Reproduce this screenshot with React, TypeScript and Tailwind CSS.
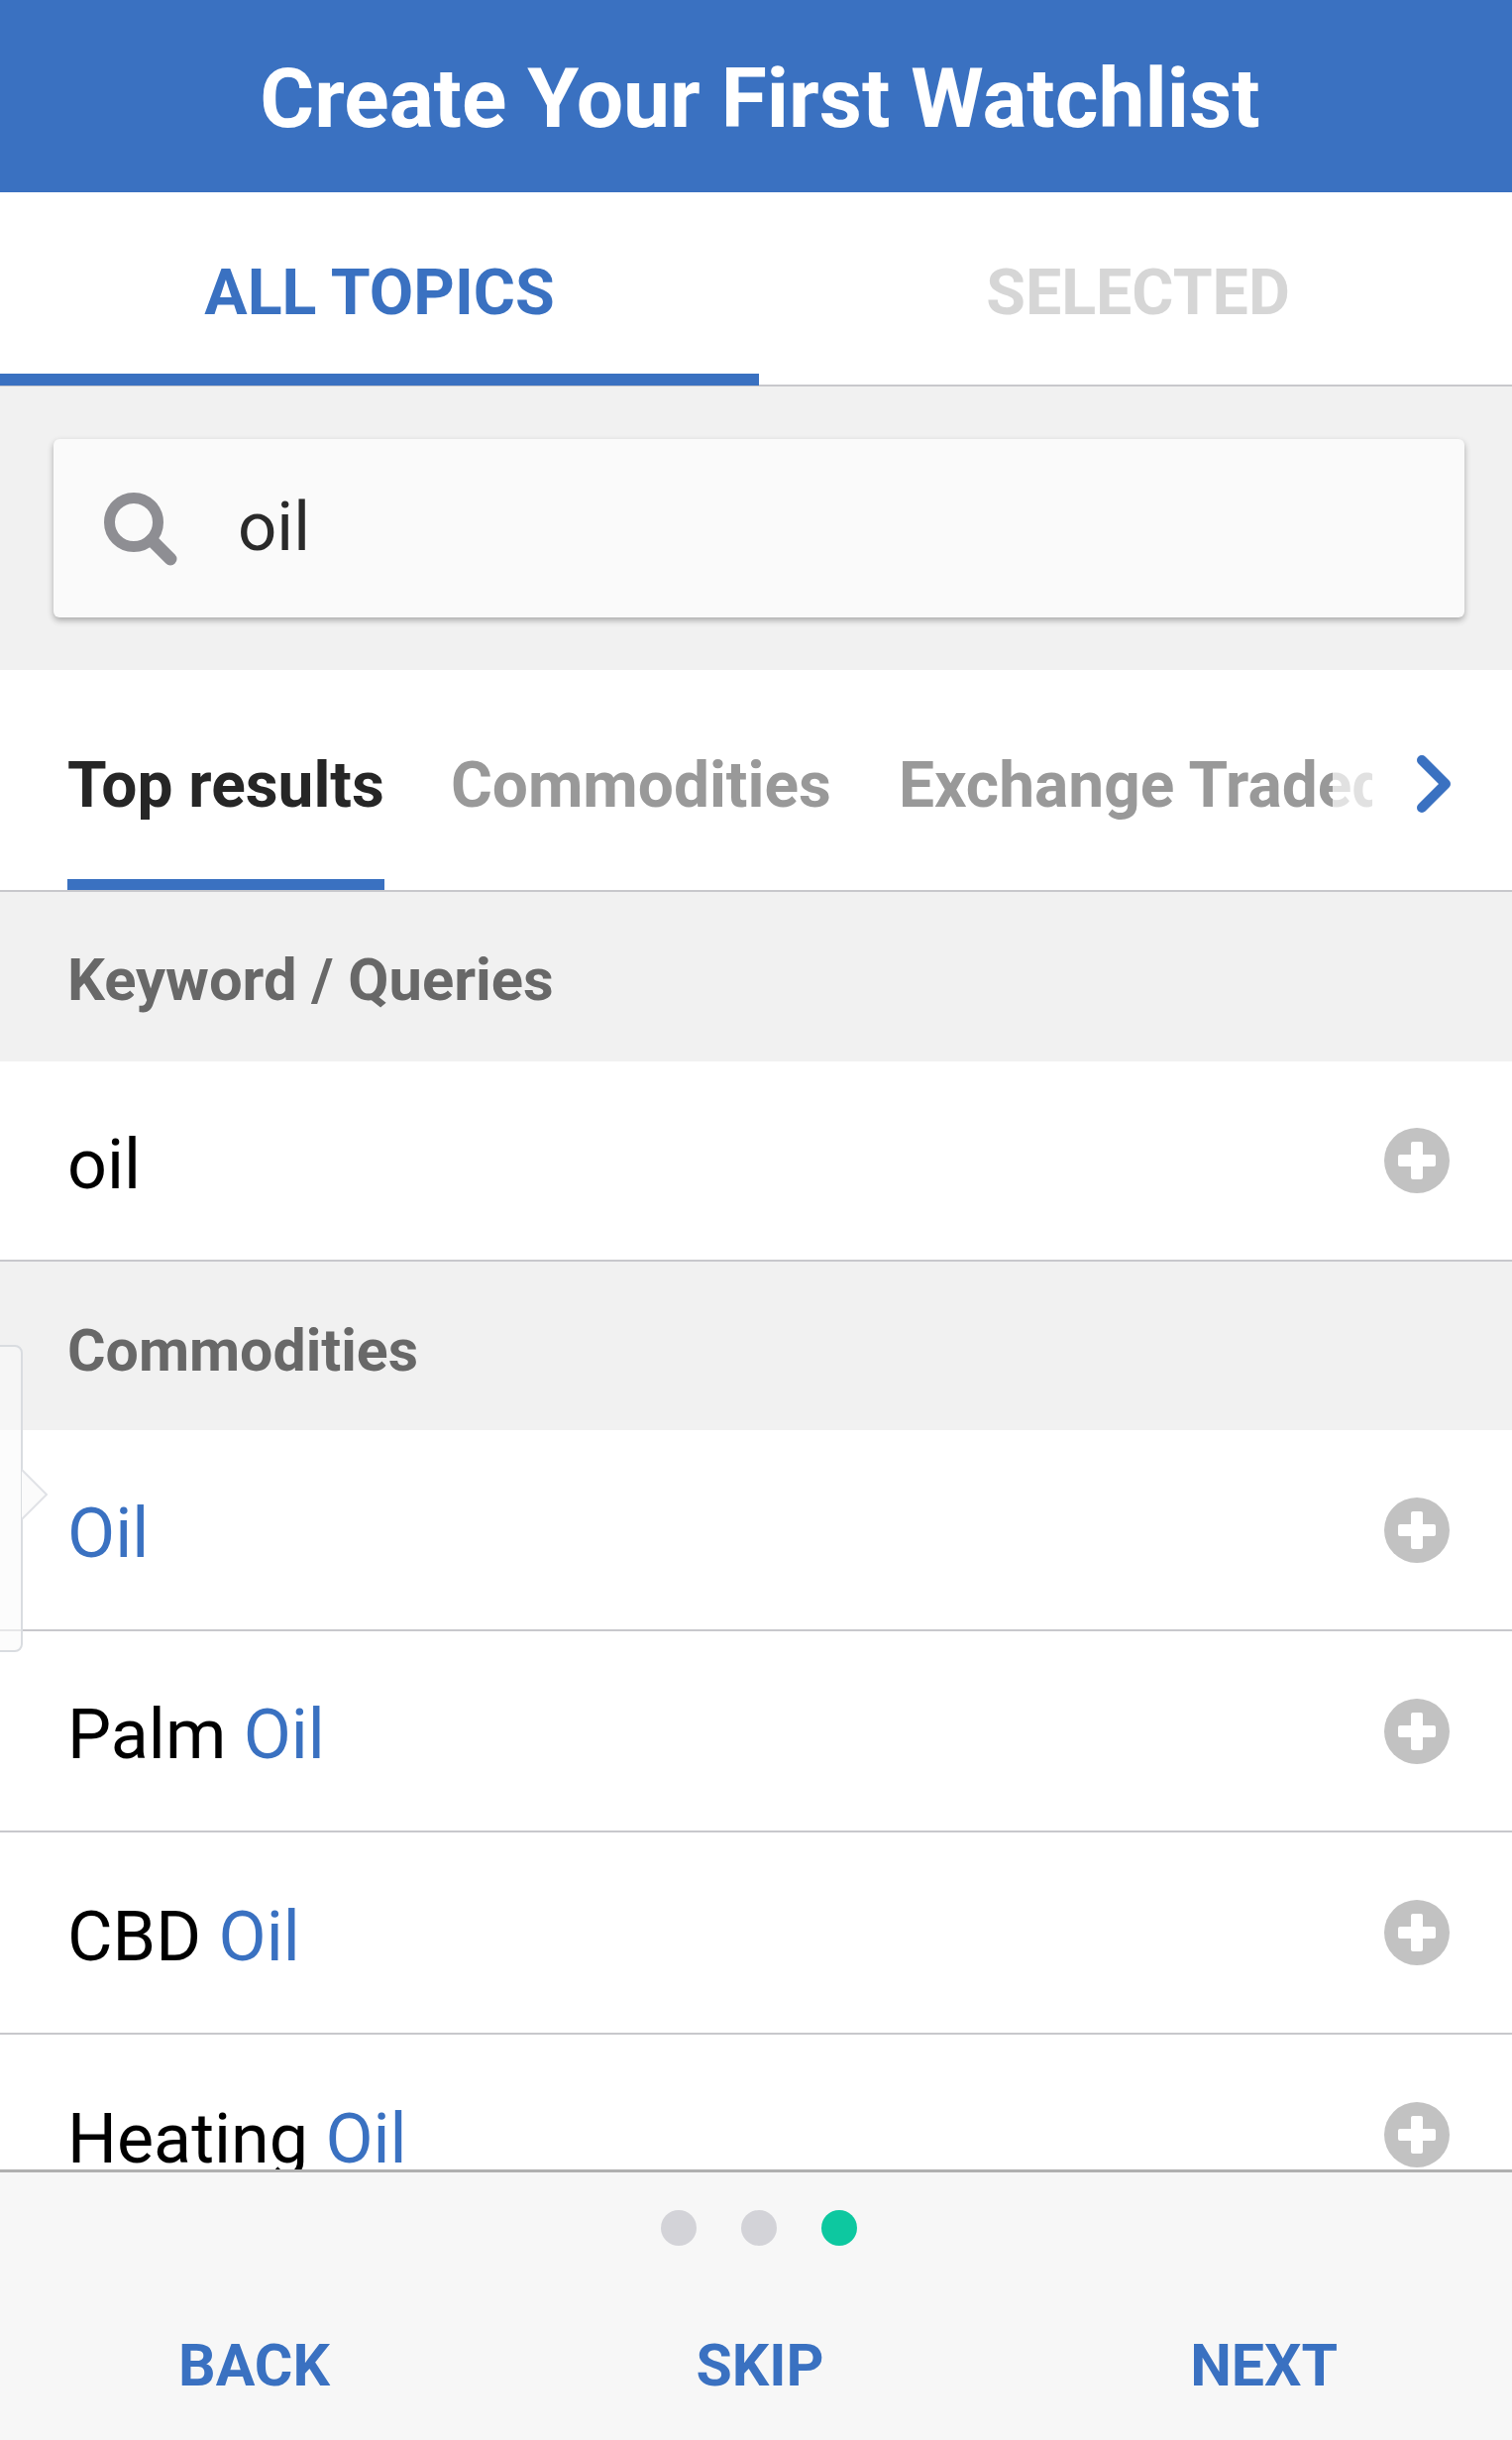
const BLUE = "text-[#3a71c1]";

function Plus({ className = "" }: { className?: string }) {
  return (
    <svg viewBox="0 0 66 66" className={`w-[66px] h-[66px] shrink-0 ${className}`}>
      <circle cx="33" cy="33" r="33" fill="#c2c2c2" />
      <rect x="14" y="27" width="38" height="12" rx="2" fill="#fff" />
      <rect x="27" y="14" width="12" height="38" rx="2" fill="#fff" />
    </svg>
  );
}

function Row({ pre, hit, h, border = true }: { pre?: string; hit: string; h: string; border?: boolean }) {
  return (
    <div className={`${h} shrink-0 bg-white flex items-center justify-between pl-[68px] pr-[63px] ${border ? "border-b-2 border-[#c8c8cc]" : ""}`}>
      <span className="text-[70px] leading-none text-black pt-[7px]">
        {pre ? pre + " " : ""}
        <span className={BLUE}>{hit}</span>
      </span>
      <Plus />
    </div>
  );
}

function Section({ label, h, size }: { label: string; h: string; size: string }) {
  return (
    <div className={`${h} shrink-0 bg-[#f1f1f1] flex items-center pl-[68px] pt-[8px] ${size} leading-none font-bold text-[#686868]`}>
      {label}
    </div>
  );
}

export default function App() {
  return (
    <div className="relative w-[1526px] h-[2462px] overflow-hidden flex flex-col bg-white font-['Roboto',sans-serif]">
      <header className="h-[194px] shrink-0 bg-[#3a71c1] flex items-center justify-center pt-[6px] pl-[8px] text-[84px] leading-none font-bold text-white whitespace-nowrap">
        Create Your First Watchlist
      </header>

      <nav className="h-[196px] shrink-0 flex border-b-2 border-[#c8c8cc] bg-white shadow-[0_1px_2px_rgba(0,0,0,0.1)]">
        <div className={`w-[766px] h-[195px] -mb-[1px] flex items-center justify-center pt-[20px] border-b-[12px] border-[#3a71c1] text-[64.5px] leading-none font-bold ${BLUE}`}>
          ALL TOPICS
        </div>
        <div className="flex-1 flex items-center justify-center pt-[8px] pl-[5px] text-[64.5px] leading-none font-bold text-[#d6d6d6]">
          SELECTED
        </div>
      </nav>

      <div className="h-[286px] shrink-0 bg-[#f1f1f1] pt-[53px] pl-[54px] pr-[48px]">
        <div className="h-[180px] bg-[#fafafa] rounded-[6px] shadow-[0_3px_6px_rgba(0,0,0,0.3)] flex items-center pl-[51px]">
          <svg viewBox="0 0 74 74" className="w-[74px] h-[74px] shrink-0 mt-[2px]">
            <circle cx="30" cy="30" r="24.5" fill="none" stroke="#8e8e93" strokeWidth="11" />
            <path d="M48 48 L67 67" stroke="#8e8e93" strokeWidth="13" strokeLinecap="round" />
          </svg>
          <span className="ml-[61px] text-[69px] leading-none text-[#2a2a2a] -mt-[3px]">oil</span>
        </div>
      </div>

      <div className="relative h-[224px] shrink-0 bg-white border-b-2 border-[#c8c8cc] flex pl-[68px] overflow-hidden whitespace-nowrap">
        <div className="h-[222px] shrink-0 flex items-center pt-[23px] border-b-[11px] border-[#3a71c1] text-[64px] leading-none font-bold text-[#262626]">
          Top results
        </div>
        <div className="ml-[67px] h-[222px] shrink-0 flex items-center pt-[12px] text-[64px] leading-none font-bold text-[#999999]">
          Commodities
        </div>
        <div className="ml-[68px] h-[222px] shrink-0 flex items-center pt-[12px] text-[64px] leading-none font-bold text-[#999999]">
          Exchange Traded Funds
        </div>
        <div className="absolute top-0 bottom-0 left-[1345px] w-[40px] bg-white/70" />
        <div className="absolute top-0 bottom-0 left-[1385px] right-0 bg-white" />
        <svg viewBox="0 0 40 64" className="absolute left-[1428px] top-[83px] w-[40px] h-[64px]">
          <path d="M7 8 L31 32 L7 56" fill="none" stroke="#3a71c1" strokeWidth="10" strokeLinejoin="round" strokeLinecap="round" />
        </svg>
      </div>

      <div className="flex-1 min-h-0 overflow-hidden flex flex-col">
        <Section label="Keyword / Queries" h="h-[171px]" size="text-[59.7px]" />
        <Row hit="" pre="oil" h="h-[202px]" />
        <Section label="Commodities" h="h-[170px]" size="text-[59px]" />
        <Row hit="Oil" h="h-[203px]" />
        <Row pre="Palm" hit="Oil" h="h-[203px]" />
        <Row pre="CBD" hit="Oil" h="h-[204px]" />
        <Row pre="Heating" hit="Oil" h="h-[202px]" border={false} />
      </div>

      <footer className="h-[273px] shrink-0 bg-[#f7f7f7] border-t-[3px] border-[#b0b0b0] flex flex-col">
        <div className="flex justify-center gap-[45px] mt-[38px] pl-[5px]">
          <span className="w-[36px] h-[36px] rounded-full bg-[#d3d3d8]" />
          <span className="w-[36px] h-[36px] rounded-full bg-[#d3d3d8]" />
          <span className="w-[36px] h-[36px] rounded-full bg-[#0dc8a0]" />
        </div>
        <div className={`flex justify-between mt-[91px] pl-[180px] pr-[176px] text-[59px] leading-none font-bold ${BLUE}`}>
          <span>BACK</span>
          <span>SKIP</span>
          <span>NEXT</span>
        </div>
      </footer>

      <div className="absolute left-[-20px] top-[1357px] w-[43px] h-[310px] rounded-[8px] border-2 border-[#d9dce0] bg-[#fafafa]/60" />
      <svg viewBox="0 0 28 54" className="absolute left-[22px] top-[1481px] w-[28px] h-[54px]">
        <path d="M0 2 L25 27 L0 52" fill="#fbfbfb" stroke="#e0e2e6" strokeWidth="2" />
      </svg>
    </div>
  );
}
